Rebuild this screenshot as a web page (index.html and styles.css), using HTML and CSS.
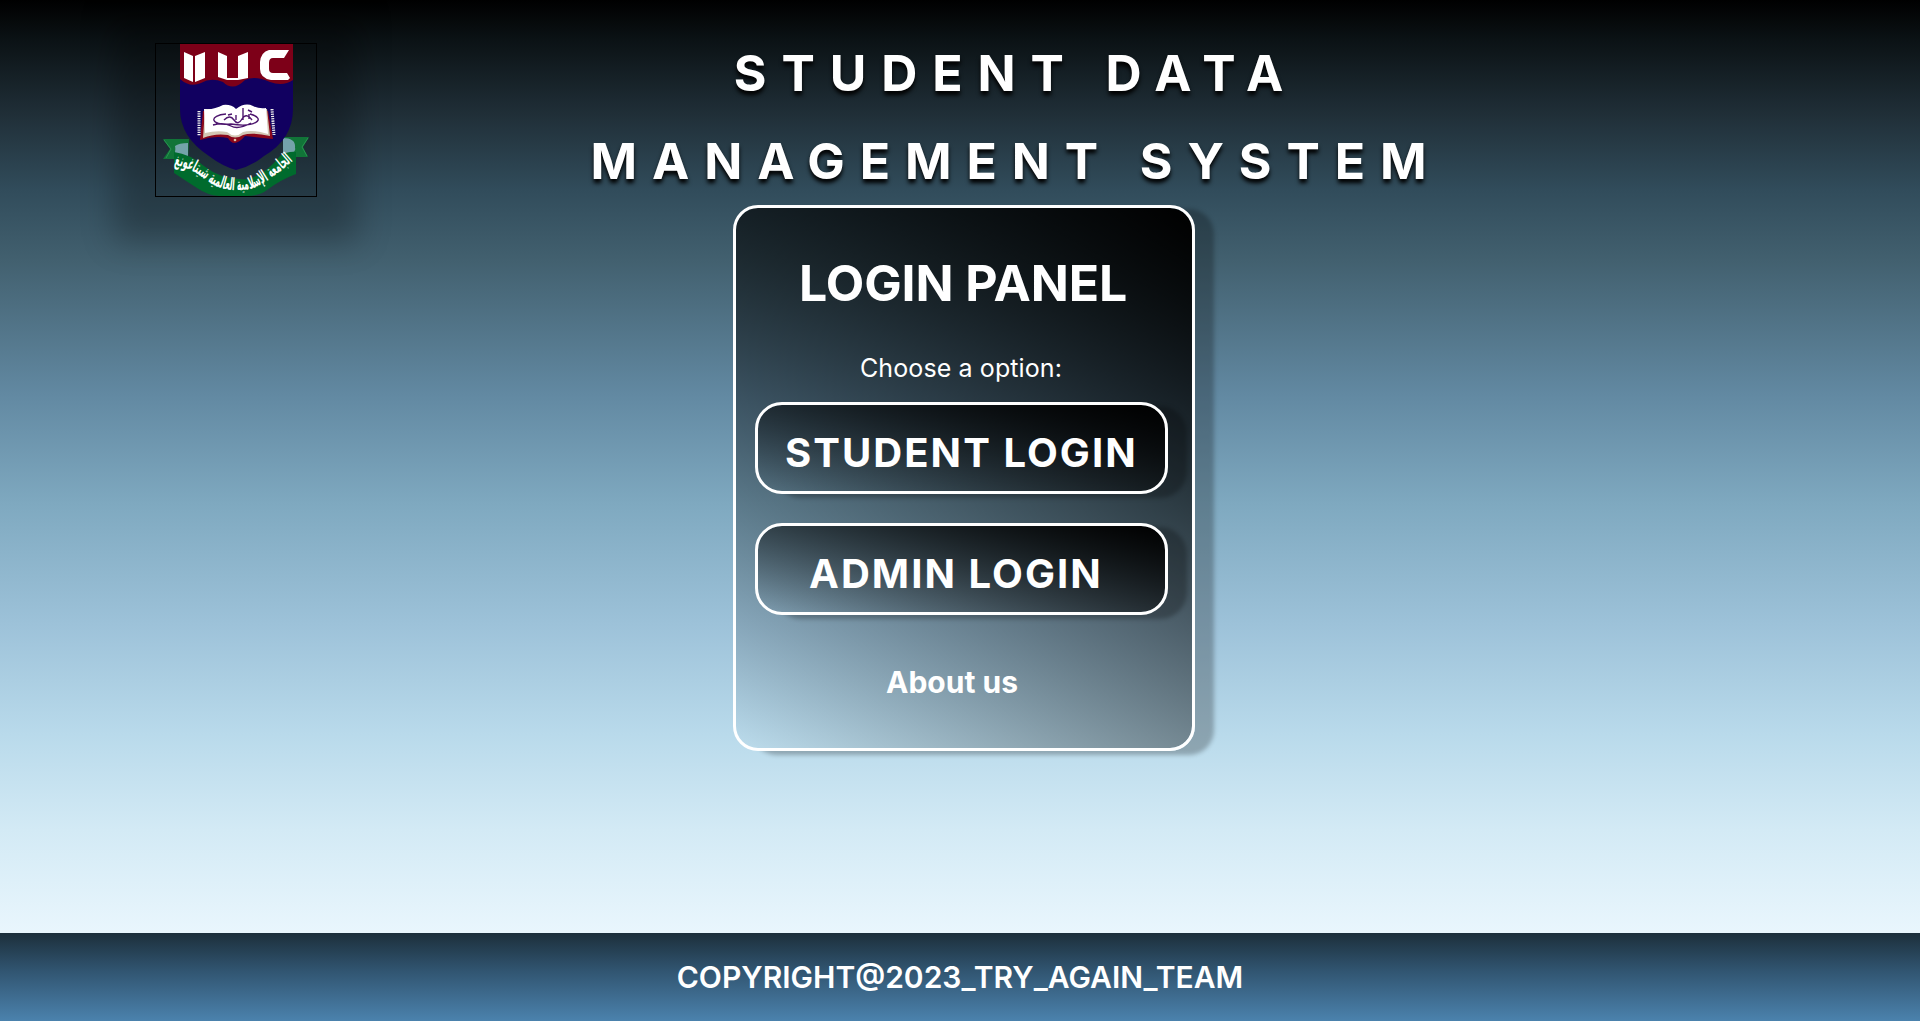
FILE: index.html
```html
<!DOCTYPE html>
<html lang="en">
<head>
<meta charset="utf-8">
<title>Student Data Management System</title>
<link rel="stylesheet" href="styles.css">
</head>
<body>
<div class="page">
  <header class="header">
    <div class="logo">
      <svg viewBox="0 0 160 152" width="160" height="152" role="img" aria-label="IIUC">
        <path fill="#117438" d="M7 95H33L32 115H7L14 105ZM127 93H153L147 103 152 113H127Z"/>
        <path fill="#74a3aa" d="M32 99V114L18 112Q20 106 19 102Q23 99 32 99ZM127 94Q140 94 139 104Q141 109 127 112Z"/>
        <path fill="#006b2d" d="M18 108Q34 110 48 122Q67 137 92 135Q110 130 124 112Q132 107 140 108V130Q124 136 111 146Q103 152 91 152H63Q51 151 41 144Q30 137 18 129Z"/>
        <path fill="none" stroke="#28934f" stroke-width="1" d="M8 96L15 105 10 114M152 94L146 103 151 112"/>
        <path fill="#110060" d="M24 30H137V65Q137 95 108 112Q96 122 80 126Q66 122 53 112Q24 93 24 65Z"/>
        <path fill="#7d0018" d="M24 0H137V36Q127 43 114 38Q99 31 89 36Q77 48 67 38Q55 33 45 39Q34 44 24 35Z"/>
        <path fill="#fff" d="M28 8L37 12V38L28 34ZM39 12L49 8V34L39 38ZM62 8L71 12V34H82V12L92 8V34L82 36H71L62 33ZM113 6H133L128 14H117Q113 14 113 19V25Q113 29 117 29H131L134 34 132 36H115Q104 34 104 25V18Q105 8 113 6Z"/>
        <path fill="#8b071b" d="M47 67H112L117 95Q99 93 89 92Q78 105 72 94Q59 91 44 96Z"/>
        <path fill="#d2c7b4" d="M49 65H111L114 92Q96 88 87 91Q79 96 72 91Q59 89 47 94Z"/>
        <path fill="#fff" d="M48 65Q58 66 67 61Q75 60 80 65Q89 58 97 62Q103 65 110 64L112 90Q96 85 87 88Q79 95 71 88Q61 86 49 89Z"/>
        <path fill="none" stroke="#eee" stroke-width="3" stroke-dasharray="1.3 1" d="M43 67V92M116 65L118 91"/>
        <circle cx="79" cy="96" r="1.3" fill="#ddc9aa"/>
        <path fill="none" stroke="#4d166e" stroke-width="1.4" d="M70 70C53 71 53 82 75 80C98 84 112 75 94 70M68 76Q74 70 78 76T86 75 96 76M57 81Q68 78 75 82T95 79M80 71V76M87 64V76M93 70V75M92 66L96 68M72 71L76 70"/>
        <path id="ribbon-line" fill="none" d="M18 121Q36 124 51 137Q72 151 97 144Q113 138 140 114"/>
        <text class="motto" textLength="134" lengthAdjust="spacingAndGlyphs"><textPath href="#ribbon-line">الجامعة الإسلامية العالمية شيتاغونغ</textPath></text>
      </svg>
    </div>
    <h1 class="title">STUDENT DATA<br>MANAGEMENT SYSTEM</h1>
  </header>
  <main class="panel">
    <h2 class="panel-title">LOGIN PANEL</h2>
    <p class="prompt">Choose a option:</p>
    <a class="login student">STUDENT LOGIN</a>
    <a class="login admin">ADMIN LOGIN</a>
    <a class="about">About us</a>
  </main>
  <footer class="footer">COPYRIGHT@2023_TRY_AGAIN_TEAM</footer>
</div>
</body>
</html>
```
FILE: styles.css
```css
* { box-sizing: border-box; }
body { margin: 0; background: #fff; color: #fff; font-family: Inter, sans-serif; }
.page {
  display: flex;
  flex-direction: column;
  height: 1021px;
  background: linear-gradient(180deg, #000 0, #0b1215 40px, #202f38 115px, #314c5b 190px, #42606f 260px, #6289a2 395px, #7fa9c0 505px, #9dc2d9 625px, #b9daeb 735px, #d3eaf5 830px, #e9f6fd 933px);
}
.header { display: flex; height: 205px; flex: none; }
.logo {
  flex: none;
  width: 162px;
  height: 154px;
  margin: 43px 0 0 155px;
  border: 1px solid #000;
  background: rgba(0, 0, 0, .25);
  box-shadow: 0 4px 30px 41px rgba(0, 0, 0, .25);
}
.logo svg { display: block; }
.motto { fill: #fff; font: bold 17px "DejaVu Sans", sans-serif; }
.title {
  margin: 29px 0 0 249px;
  width: 900px;
  font-size: 50px;
  line-height: 88px;
  font-weight: 700;
  letter-spacing: 14.9px;
  text-align: center;
  text-shadow: 0 4px 4px #000;
}
.panel {
  display: flex;
  flex-direction: column;
  align-items: flex-start;
  flex: none;
  width: 462px;
  height: 546px;
  margin-left: 733px;
  padding-left: 19px;
  border: 3px solid #fff;
  border-radius: 25px;
  background: linear-gradient(216deg, #000 0%, rgba(0, 0, 0, 0) 100%) padding-box;
  box-shadow: 19px 4px 4px rgba(0, 0, 0, .25);
}
.panel-title { margin: 45px 0 0 44px; font-size: 50px; line-height: 61px; font-weight: 700; letter-spacing: -.1px; }
.prompt { margin: 39px 0 0 105px; font-size: 25px; line-height: 30px; letter-spacing: .1px; }
.login {
  width: 413px;
  height: 92px;
  border: 3px solid #fff;
  border-radius: 27px;
  background: linear-gradient(193deg, #000 0%, rgba(0, 0, 0, 0) 100%) padding-box;
  box-shadow: 19px 4px 4px rgba(0, 0, 0, .25);
  font-size: 40px;
  line-height: 96px;
  font-weight: 700;
  letter-spacing: 2.05px;
}
.student { margin-top: 19px; padding-left: 27px; }
.admin { margin-top: 29px; padding-left: 51px; }
.about { margin: 49px 0 0 131px; font-size: 30px; line-height: 36px; font-weight: 700; }
.footer {
  height: 88px;
  margin-top: auto;
  background: linear-gradient(180deg, #1c2f3b, #315571 43%, #4b82ad);
  font-size: 30px;
  line-height: 88px;
  font-weight: 600;
  text-align: center;
}
```
